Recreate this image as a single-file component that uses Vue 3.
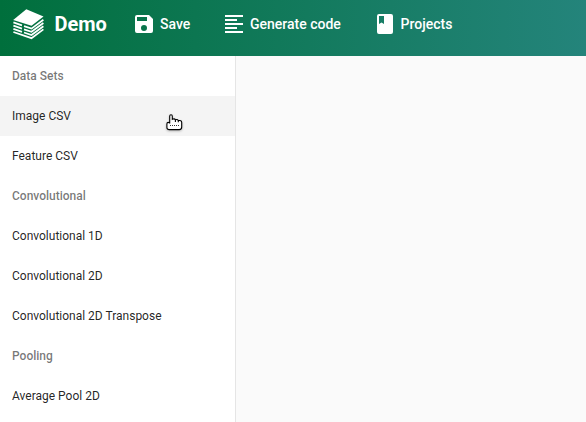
<script setup>
const groups = [
  { title: 'Data Sets', items: ['Image CSV', 'Feature CSV'] },
  { title: 'Convolutional', items: ['Convolutional 1D', 'Convolutional 2D', 'Convolutional 2D Transpose'] },
  { title: 'Pooling', items: ['Average Pool 2D'] },
]
const actions = [
  { label: 'Save', path: 'M15 9H5V5h10m-3 14a3 3 0 1 1 0-6 3 3 0 0 1 0 6m5-16H5a2 2 0 0 0-2 2v14a2 2 0 0 0 2 2h14a2 2 0 0 0 2-2V7z' },
  { label: 'Generate code', path: 'M3 3h18v2H3zm0 4h12v2H3zm0 4h18v2H3zm0 4h12v2H3zm0 4h18v2H3z' },
  { label: 'Projects', path: 'M18 2H6a2 2 0 0 0-2 2v16a2 2 0 0 0 2 2h12a2 2 0 0 0 2-2V4a2 2 0 0 0-2-2M6 4h5v8l-2.5-1.5L6 12z' },
]
</script>

<template>
  <div class="app">
    <header class="toolbar">
      <svg class="logo" viewBox="0 0 32 32">
        <path class="face" d="M14.3 1.3 31.5 8.6 19.5 17.8 1.2 12z" />
        <path class="sheet" d="M1.4 14.4 10 17.4M12 18.1 19.5 20.6 31.4 11.8" />
        <path class="sheet" d="M1.4 17.6 10 20.6M12 21.3 19.5 23.8 31.4 15" />
        <path class="sheet" d="M1.4 20.8 10 23.8M12 24.5 19.5 27 31.4 18.2" />
        <path class="sheet" d="M1.4 24 19.5 30.2 31.4 21.4" />
      </svg>
      <span class="brand">Demo</span>
      <nav class="actions">
        <a v-for="a in actions" :key="a.label" class="action">
          <svg class="icon" viewBox="0 0 24 24"><path :d="a.path" /></svg>
          <span>{{ a.label }}</span>
        </a>
      </nav>
    </header>
    <div class="body">
      <aside class="sidebar">
        <template v-for="g in groups" :key="g.title">
          <div class="subheader">{{ g.title }}</div>
          <div v-for="i in g.items" :key="i" class="item" :class="{ hovered: i === 'Image CSV' }">{{ i }}</div>
        </template>
      </aside>
      <main class="canvas"></main>
    </div>
    <svg class="cursor" viewBox="0 0 18 18">
      <path d="M4.7 10.5V3.2Q4.7 1.7 6 1.7T7.3 3.2V6.3Q9.7 5.3 10.4 6.8 12.6 6 13.3 7.6 16.7 7 16.7 9.6V14Q16.7 16.6 14.3 16.6H4.3Q2 16.6 1.9 14.4V11Q1.9 9.4 3.2 9.4 4.5 9.4 4.7 10.5zM10.4 6.8V9M13.3 7.6V9.2" />
      <path class="dots" d="M5 12.5h9" />
    </svg>
  </div>
</template>

<style>
body { background: #fafafa; overflow: hidden; }
</style>
<style scoped>
.app { position: relative; height: 422px; display: flex; flex-direction: column; overflow: hidden; font-family: Roboto, sans-serif; background: #fafafa; }
.toolbar { box-sizing: border-box; flex: none; height: 56px; padding: 0 0 8px 12px; display: flex; align-items: center; color: #fff; background: linear-gradient(to right, #006f3c, #24847b); }
.logo { width: 32px; height: 32px; fill: none; }
.face { fill: #fff; }
.sheet { stroke: #fff; stroke-width: 1.75; }
.brand { margin-left: 10.5px; width: 77.5px; font-size: 20px; font-weight: 700; line-height: 24px; }
.actions { display: flex; align-items: center; gap: 31.7px; }
.action { display: flex; align-items: center; gap: 4px; font-size: 14px; font-weight: 500; white-space: nowrap; }
.icon { width: 24px; height: 24px; fill: #fff; }
.body { flex: 1; display: flex; min-height: 0; }
.sidebar { flex: none; width: 235px; background: #fff; border-right: 1px solid #e5e5e5; overflow: hidden; }
.canvas { flex: 1; }
.subheader, .item { height: 40px; line-height: 40px; padding-left: 12px; font-size: 12px; color: rgba(0, 0, 0, .87); }
.subheader { font-weight: 500; color: rgba(0, 0, 0, .54); }
.hovered { background: #f4f4f4; }
.cursor { position: absolute; left: 165px; top: 113px; width: 18px; height: 18px; fill: #fff; stroke: #000; stroke-width: 1.1; overflow: visible; filter: drop-shadow(0 1px 1px rgba(0, 0, 0, .25)); }
.dots { stroke-width: .8; stroke-dasharray: 1 1; }
</style>
